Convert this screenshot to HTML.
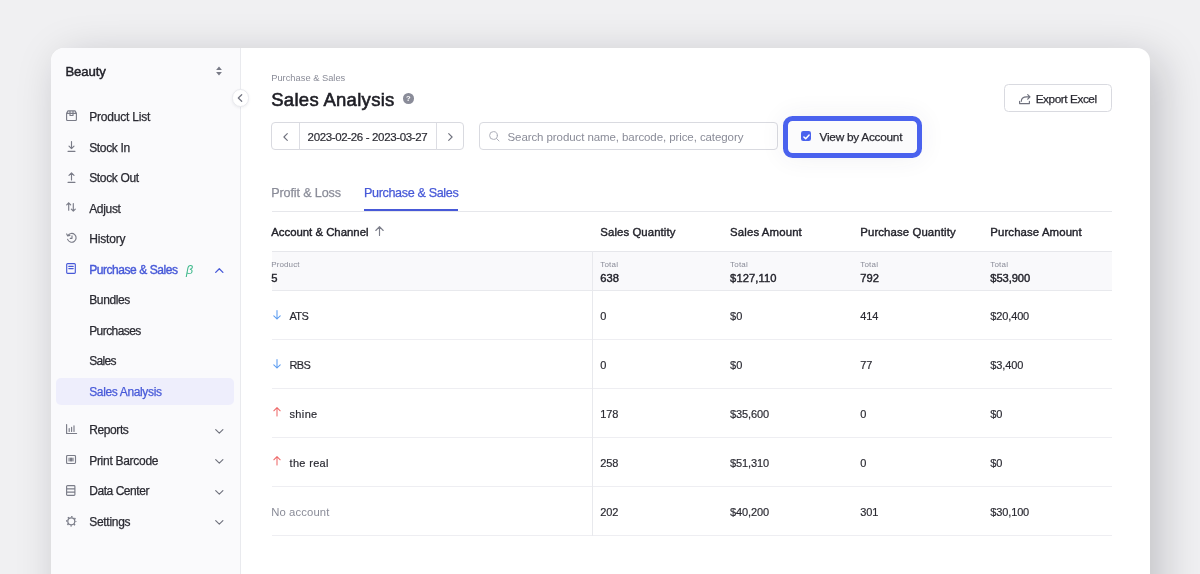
<!DOCTYPE html>
<html lang="en">
<head>
<meta charset="utf-8">
<title>Sales Analysis</title>
<style>
*{box-sizing:border-box;margin:0;padding:0}
html,body{width:1200px;height:574px;overflow:hidden}
body{background:#f0f0f2;font-family:"Liberation Sans",sans-serif;color:#2a2a32;position:relative}
.card{position:absolute;left:51px;top:48px;width:1099px;height:620px;background:#fff;border-radius:13px 13px 0 0;box-shadow:10px 10px 44px rgba(15,15,30,.21)}
.side{position:absolute;left:51px;top:48px;width:190px;height:620px;background:#fafafc;border-right:1px solid #e9eaee;border-radius:13px 0 0 0}
.t{position:absolute;white-space:nowrap}
.txt{position:absolute;left:0;top:0;width:1200px;height:574px;will-change:transform}
.a{position:absolute}
.sel{left:56px;top:378px;width:178px;height:27px;background:#eeeefc;border-radius:5px}
svg{position:absolute;overflow:visible;fill:none;stroke-linecap:round;stroke-linejoin:round}
.ic{stroke:#7a7c88;stroke-width:1.150}
.box{position:absolute;border:1px solid #d9dae0;border-radius:4px;background:#fff}
.hl{position:absolute;left:271.500px;width:840px;height:1px;background:#eeeef2}
</style>
</head>
<body>
<div class="card"></div>
<div class="side"></div>
<div class="a sel"></div>

<!-- collapse button -->
<div class="a" style="left:231.500px;top:89.300px;width:17.500px;height:17.500px;border-radius:50%;background:#fff;border:1px solid #e9eaee;box-shadow:0 1px 3px rgba(30,30,50,.07)"></div>
<svg class="ic" style="left:237px;top:94.200px;stroke:#737581;stroke-width:1.250" width="6" height="8" viewBox="0 0 6 8"><path d="M4.700 .700 1.300 4l3.400 3.300"/></svg>

<!-- brand sort arrows -->
<svg style="left:214.500px;top:65.700px" width="8" height="10" viewBox="0 0 8 10"><path d="M4 .4 6.900 4H1.100Z M4 9.600 1.100 6h5.800Z" fill="#787a86" stroke="none"/></svg>

<!-- sidebar icons -->
<svg class="ic" style="left:65.5px;top:110.4px" width="11" height="11" viewBox="0 0 11 11"><path d="M.6 3.4 2 .9h7l1.4 2.5v6.2a.9.9 0 0 1-.9.9h-8a.9.9 0 0 1-.9-.9Z M.6 3.400h9.800 M4 .900v4.600h3V.900"/></svg>
<svg class="ic" style="left:66.700px;top:141px" width="9" height="11" viewBox="0 0 9 11"><path d="M4.500 .600v7 M2 5.200 4.500 7.700 7 5.200 M1 10.300h7"/></svg>
<svg class="ic" style="left:66.700px;top:172px" width="9" height="11" viewBox="0 0 9 11"><path d="M4.500 7.900V.800 M2 3.300 4.500 .800 7 3.300 M1 10.300h7"/></svg>
<svg class="ic" style="left:66px;top:202.4px" width="10" height="10" viewBox="0 0 10 10"><path d="M2.7 8.2V.8 M.7 2.9 2.7 .8 4.7 2.9 M7.3 1.6v7.5 M5.3 7.1l2 2.1 2-2.1"/></svg>
<svg class="ic" style="left:65.8px;top:233.2px" width="11" height="10" viewBox="0 0 11 10"><path d="M1.9 2.6A4.4 4.4 0 1 1 1.6 6.4 M.7 .9 1.7 2.9 3.9 2.4 M6 2.9V5.3H4.2"/></svg>
<svg class="ic" style="left:66.2px;top:263.3px;stroke:#4759d8;stroke-width:1.15" width="10" height="11" viewBox="0 0 10 11"><path d="M.7 1.5a.9.9 0 0 1 .9-.9h6.8a.9.9 0 0 1 .9.9v8a.9.9 0 0 1-.9.9H1.6a.9.9 0 0 1-.9-.9Z M2.8 3.4h4.4 M2.8 5.6h4.4"/></svg>
<svg class="ic" style="left:65.6px;top:424.3px" width="11" height="10" viewBox="0 0 11 10"><path d="M.6 .5v9h10 M3.2 7.4V4.6 M5.6 7.4V3.2 M8 7.4V1.8"/></svg>
<svg class="ic" style="left:65.9px;top:455.3px" width="10" height="9" viewBox="0 0 10 9"><path d="M.6 1.4a.9.9 0 0 1 .9-.9h7.1a.9.9 0 0 1 .9.9v6.2a.9.9 0 0 1-.9.9H1.5a.9.9 0 0 1-.9-.9Z M3.1 3v3 M4.6 3v3 M5.6 3v3 M7 3v3"/></svg>
<svg class="ic" style="left:66.4px;top:485.2px" width="10" height="11" viewBox="0 0 10 11"><path d="M.6 1.5a.9.9 0 0 1 .9-.9h6.5a.9.9 0 0 1 .9.9v8a.9.9 0 0 1-.9.9H1.5a.9.9 0 0 1-.9-.9Z M.6 3.9h8.3 M.6 7.1h8.3"/></svg>
<svg class="ic" style="left:65.900px;top:516.400px" width="11" height="11" viewBox="0 0 11 11"><circle cx="5.300" cy="5.300" r="3.500" stroke-width="1.200"/><circle cx="5.300" cy="5.300" r="4.600" stroke-width="1.300" stroke-dasharray="1.500 2.113" stroke-dashoffset=".75" stroke-linecap="butt"/></svg>

<!-- sidebar chevrons -->
<svg class="ic" style="left:214.7px;top:268.3px;stroke:#4759d8;stroke-width:1.3" width="9" height="5" viewBox="0 0 9 5"><path d="M.7 4.4 4.3 .8 7.900 4.400"/></svg>
<svg class="ic ch" style="left:214.7px;top:428.6px;stroke:#6f717d" width="9" height="5" viewBox="0 0 9 5"><path d="M.7 .6 4.300 4.200 7.900 .600"/></svg>
<svg class="ic ch" style="left:214.7px;top:459.1px;stroke:#6f717d" width="9" height="5" viewBox="0 0 9 5"><path d="M.7 .6 4.300 4.200 7.900 .600"/></svg>
<svg class="ic ch" style="left:214.7px;top:489.6px;stroke:#6f717d" width="9" height="5" viewBox="0 0 9 5"><path d="M.7 .6 4.300 4.200 7.900 .600"/></svg>
<svg class="ic ch" style="left:214.7px;top:520.1px;stroke:#6f717d" width="9" height="5" viewBox="0 0 9 5"><path d="M.7 .6 4.300 4.200 7.900 .600"/></svg>

<!-- help icon -->
<div class="a" style="left:403.300px;top:92.900px;width:10.700px;height:10.700px;border-radius:50%;background:#8a8c99"></div>

<!-- export button -->
<div class="box" style="left:1004px;top:84px;width:107.500px;height:28px;border-radius:4.500px"></div>
<svg class="ic" style="left:1019px;top:93.8px;stroke:#6f717d" width="12" height="11" viewBox="0 0 12 11"><path d="M.6 7.300v2.300h9.800V7.300 M2.300 7.300C2.300 4.300 4.300 2.900 7.600 2.900H10.900 M8.700 .6l2.300 2.300-2.300 2.300"/></svg>

<!-- date picker -->
<div class="box" style="left:271px;top:122px;width:193px;height:28px"></div>
<div class="a" style="left:299px;top:123px;width:1px;height:26.500px;background:#dcdde3"></div>
<div class="a" style="left:436px;top:123px;width:1px;height:26.500px;background:#dcdde3"></div>
<svg class="ic" style="left:283.300px;top:132.600px;stroke:#6f717d;stroke-width:1.1" width="5" height="8" viewBox="0 0 5 8"><path d="M4.300 .600.900 4l3.400 3.400"/></svg>
<svg class="ic" style="left:447.800px;top:132.600px;stroke:#6f717d;stroke-width:1.1" width="5" height="8" viewBox="0 0 5 8"><path d="M.700 .600 4.100 4 .700 7.400"/></svg>

<!-- search -->
<div class="box" style="left:479px;top:122px;width:299px;height:28px"></div>
<svg class="ic" style="left:488.800px;top:130.500px;stroke:#adafb9;stroke-width:1" width="11" height="11" viewBox="0 0 11 11"><circle cx="4.500" cy="4.500" r="3.900"/><path d="M7.400 7.400 10 10"/></svg>

<!-- highlight -->
<div class="a" style="left:783px;top:115.800px;width:139px;height:42.400px;border:5.400px solid #4a62ee;border-radius:9.500px;background:#fbfbfc;box-shadow:0 0 26px rgba(60,60,90,.07)"></div>
<div class="a" style="left:800.900px;top:131.200px;width:10.300px;height:10.300px;border-radius:2.200px;background:#4a62ee"></div>
<svg style="left:802.600px;top:133.600px;stroke:#fff;stroke-width:1.500" width="7" height="6" viewBox="0 0 7 6"><path d="M.900 3 2.700 4.800 6.100 1"/></svg>

<!-- tabs -->
<div class="a" style="left:271.500px;top:211px;width:840px;height:1px;background:#e6e7eb"></div>
<div class="a" style="left:364px;top:208.500px;width:94px;height:2.600px;background:#4759d8"></div>

<!-- table -->
<svg class="ic" style="left:374.900px;top:226.300px;stroke:#7d7f8b" width="9" height="10" viewBox="0 0 9 10"><path d="M4.500 9.500V.8 M.800 4.500 4.500 .700 8.200 4.500"/></svg>
<div class="a" style="left:271.500px;top:251px;width:840px;height:1px;background:#e6e7eb"></div>
<div class="a" style="left:271.500px;top:252px;width:840px;height:38px;background:#f9f9fb"></div>
<div class="a" style="left:271.500px;top:290px;width:840px;height:1px;background:#e8e9ed"></div>
<div class="hl" style="top:339px"></div>
<div class="hl" style="top:388px"></div>
<div class="hl" style="top:437px"></div>
<div class="hl" style="top:486px"></div>
<div class="hl" style="top:535px"></div>
<div class="a" style="left:592px;top:251px;width:1px;height:285px;background:#e8e9ed"></div>

<!-- row arrows -->
<svg class="ic" style="left:272.600px;top:309.600px;stroke:#5a9bf0;stroke-width:1.050" width="8" height="10" viewBox="0 0 8 10"><path d="M4 .600v8.400 M.800 5.800 4 9 7.200 5.800"/></svg>
<svg class="ic" style="left:272.600px;top:358.600px;stroke:#5a9bf0;stroke-width:1.050" width="8" height="10" viewBox="0 0 8 10"><path d="M4 .600v8.400 M.800 5.800 4 9 7.200 5.800"/></svg>
<svg class="ic" style="left:272.600px;top:407.300px;stroke:#ee6a6a;stroke-width:1.050" width="8" height="10" viewBox="0 0 8 10"><path d="M4 9V.600 M.800 3.800 4 .600 7.200 3.800"/></svg>
<svg class="ic" style="left:272.600px;top:456.300px;stroke:#ee6a6a;stroke-width:1.050" width="8" height="10" viewBox="0 0 8 10"><path d="M4 9V.600 M.800 3.800 4 .600 7.200 3.800"/></svg>

<div class="txt">
<span class="t" id="brand" style="left:65.40px;top:63.00px;font-size:13.2px;line-height:17px;color:#22222a;letter-spacing:-0.127px;-webkit-text-stroke:.45px #22222a;">Beauty</span>
<span class="t" id="s0" style="left:89.20px;top:110.00px;font-size:12px;line-height:15px;color:#2a2a32;letter-spacing:-0.198px;-webkit-text-stroke:.25px #2a2a32;">Product List</span>
<span class="t" id="s1" style="left:89.20px;top:141.00px;font-size:12px;line-height:15px;color:#2a2a32;letter-spacing:-0.345px;-webkit-text-stroke:.25px #2a2a32;">Stock In</span>
<span class="t" id="s2" style="left:89.20px;top:171.00px;font-size:12px;line-height:15px;color:#2a2a32;letter-spacing:-0.354px;-webkit-text-stroke:.25px #2a2a32;">Stock Out</span>
<span class="t" id="s3" style="left:89.20px;top:202.00px;font-size:12px;line-height:15px;color:#2a2a32;letter-spacing:-0.327px;-webkit-text-stroke:.25px #2a2a32;">Adjust</span>
<span class="t" id="s4" style="left:89.20px;top:232.00px;font-size:12px;line-height:15px;color:#2a2a32;letter-spacing:-0.178px;-webkit-text-stroke:.25px #2a2a32;">History</span>
<span class="t" id="s5" style="left:89.20px;top:263.00px;font-size:12px;line-height:15px;color:#4759d8;letter-spacing:-0.443px;-webkit-text-stroke:.4px #4759d8;">Purchase &amp; Sales</span>
<span class="t" id="s6" style="left:89.20px;top:293.00px;font-size:12px;line-height:15px;color:#2a2a32;letter-spacing:-0.368px;-webkit-text-stroke:.25px #2a2a32;">Bundles</span>
<span class="t" id="s7" style="left:89.20px;top:324.00px;font-size:12px;line-height:15px;color:#2a2a32;letter-spacing:-0.578px;-webkit-text-stroke:.25px #2a2a32;">Purchases</span>
<span class="t" id="s8" style="left:89.20px;top:354.00px;font-size:12px;line-height:15px;color:#2a2a32;letter-spacing:-0.646px;-webkit-text-stroke:.25px #2a2a32;">Sales</span>
<span class="t" id="s9" style="left:89.20px;top:385.00px;font-size:12px;line-height:15px;color:#4759d8;letter-spacing:-0.355px;-webkit-text-stroke:.25px #4759d8;">Sales Analysis</span>
<span class="t" id="s10" style="left:89.20px;top:423.00px;font-size:12px;line-height:15px;color:#2a2a32;letter-spacing:-0.390px;-webkit-text-stroke:.25px #2a2a32;">Reports</span>
<span class="t" id="s11" style="left:89.20px;top:454.00px;font-size:12px;line-height:15px;color:#2a2a32;letter-spacing:-0.285px;-webkit-text-stroke:.25px #2a2a32;">Print Barcode</span>
<span class="t" id="s12" style="left:89.20px;top:484.00px;font-size:12px;line-height:15px;color:#2a2a32;letter-spacing:-0.446px;-webkit-text-stroke:.25px #2a2a32;">Data Center</span>
<span class="t" id="s13" style="left:89.20px;top:515.00px;font-size:12px;line-height:15px;color:#2a2a32;letter-spacing:-0.282px;-webkit-text-stroke:.25px #2a2a32;">Settings</span>
<span class="t" id="beta" style="left:185.90px;top:262.00px;font-size:12.5px;line-height:16px;color:#3fb98c;font-style:italic;font-family:"Liberation Serif",serif;">β</span>
<span class="t" id="crumb" style="left:271.20px;top:72.00px;font-size:9.3px;line-height:12px;color:#8a8c98;letter-spacing:0.012px;">Purchase &amp; Sales</span>
<span class="t" id="title" style="left:271.20px;top:88.00px;font-size:18.5px;line-height:24px;color:#1e1e25;letter-spacing:0.300px;transform:translateY(-0.45px);-webkit-text-stroke:.6px #1e1e25;">Sales Analysis</span>
<span class="t" id="help" style="left:406.00px;top:94.00px;font-size:7.6px;line-height:10px;color:#fff;font-weight:bold;">?</span>
<span class="t" id="date" style="left:307.60px;top:130.00px;font-size:11.5px;line-height:15px;color:#2a2a32;letter-spacing:-0.351px;-webkit-text-stroke:.18px #2a2a32;">2023-02-26 - 2023-03-27</span>
<span class="t" id="ph" style="left:507.50px;top:130.00px;font-size:11.5px;line-height:15px;color:#8a8c98;letter-spacing:-0.087px;">Search product name, barcode, price, category</span>
<span class="t" id="vba" style="left:819.60px;top:130.00px;font-size:11.8px;line-height:15px;color:#2a2a32;letter-spacing:-0.251px;-webkit-text-stroke:.25px #2a2a32;">View by Account</span>
<span class="t" id="exp" style="left:1035.70px;top:92.00px;font-size:11.8px;line-height:15px;color:#2a2a32;letter-spacing:-0.436px;-webkit-text-stroke:.25px #2a2a32;">Export Excel</span>
<span class="t" id="tab1" style="left:271.20px;top:185.00px;font-size:12.6px;line-height:16px;color:#8a8c98;letter-spacing:-0.124px;-webkit-text-stroke:.25px #8a8c98;">Profit &amp; Loss</span>
<span class="t" id="tab2" style="left:364.00px;top:185.00px;font-size:12.6px;line-height:16px;color:#4759d8;letter-spacing:-0.357px;-webkit-text-stroke:.25px #4759d8;">Purchase &amp; Sales</span>
<span class="t" id="th0" style="left:271.20px;top:225.00px;font-size:11.4px;line-height:15px;color:#24242c;letter-spacing:-0.014px;-webkit-text-stroke:.4px #24242c;">Account &amp; Channel</span>
<span class="t" id="th1" style="left:600.30px;top:225.00px;font-size:11.4px;line-height:15px;color:#24242c;letter-spacing:0.080px;-webkit-text-stroke:.4px #24242c;">Sales Quantity</span>
<span class="t" id="th2" style="left:730.10px;top:225.00px;font-size:11.4px;line-height:15px;color:#24242c;letter-spacing:0.125px;-webkit-text-stroke:.4px #24242c;">Sales Amount</span>
<span class="t" id="th3" style="left:860.30px;top:225.00px;font-size:11.4px;line-height:15px;color:#24242c;letter-spacing:0.099px;-webkit-text-stroke:.4px #24242c;">Purchase Quantity</span>
<span class="t" id="th4" style="left:990.30px;top:225.00px;font-size:11.4px;line-height:15px;color:#24242c;letter-spacing:0.105px;-webkit-text-stroke:.4px #24242c;">Purchase Amount</span>
<span class="t" id="lb0" style="left:271.20px;top:260.00px;font-size:8px;line-height:10px;color:#8a8c98;letter-spacing:0.132px;">Product</span>
<span class="t" id="lbt0" style="left:600.30px;top:260.00px;font-size:8px;line-height:10px;color:#8a8c98;letter-spacing:0.179px;">Total</span>
<span class="t" id="lbt1" style="left:730.10px;top:260.00px;font-size:8px;line-height:10px;color:#8a8c98;letter-spacing:0.179px;">Total</span>
<span class="t" id="lbt2" style="left:860.30px;top:260.00px;font-size:8px;line-height:10px;color:#8a8c98;letter-spacing:0.179px;">Total</span>
<span class="t" id="lbt3" style="left:990.30px;top:260.00px;font-size:8px;line-height:10px;color:#8a8c98;letter-spacing:0.179px;">Total</span>
<span class="t" id="tot0" style="left:271.20px;top:271.00px;font-size:11.2px;line-height:14px;color:#24242c;-webkit-text-stroke:.4px #24242c;">5</span>
<span class="t" id="tot1" style="left:600.30px;top:271.00px;font-size:11.2px;line-height:14px;color:#24242c;letter-spacing:-0.057px;-webkit-text-stroke:.4px #24242c;">638</span>
<span class="t" id="tot2" style="left:730.10px;top:271.00px;font-size:11.2px;line-height:14px;color:#24242c;letter-spacing:0.070px;-webkit-text-stroke:.4px #24242c;">$127,110</span>
<span class="t" id="tot3" style="left:860.30px;top:271.00px;font-size:11.2px;line-height:14px;color:#24242c;letter-spacing:0.043px;-webkit-text-stroke:.4px #24242c;">792</span>
<span class="t" id="tot4" style="left:990.30px;top:271.00px;font-size:11.2px;line-height:14px;color:#24242c;letter-spacing:-0.093px;-webkit-text-stroke:.4px #24242c;">$53,900</span>
<span class="t" id="n0" style="left:289.50px;top:309.00px;font-size:11px;line-height:14px;color:#2a2a32;letter-spacing:-0.659px;-webkit-text-stroke:.18px #2a2a32;">ATS</span>
<span class="t" id="v0_0" style="left:600.30px;top:309.00px;font-size:11px;line-height:14px;color:#2a2a32;-webkit-text-stroke:.18px #2a2a32;">0</span>
<span class="t" id="v0_1" style="left:730.10px;top:309.00px;font-size:11px;line-height:14px;color:#2a2a32;letter-spacing:-0.075px;-webkit-text-stroke:.18px #2a2a32;">$0</span>
<span class="t" id="v0_2" style="left:860.30px;top:309.00px;font-size:11px;line-height:14px;color:#2a2a32;letter-spacing:-0.103px;-webkit-text-stroke:.18px #2a2a32;">414</span>
<span class="t" id="v0_3" style="left:990.30px;top:309.00px;font-size:11px;line-height:14px;color:#2a2a32;letter-spacing:-0.138px;-webkit-text-stroke:.18px #2a2a32;">$20,400</span>
<span class="t" id="n1" style="left:289.50px;top:358.00px;font-size:11px;line-height:14px;color:#2a2a32;letter-spacing:-0.608px;-webkit-text-stroke:.18px #2a2a32;">RBS</span>
<span class="t" id="v1_0" style="left:600.30px;top:358.00px;font-size:11px;line-height:14px;color:#2a2a32;-webkit-text-stroke:.18px #2a2a32;">0</span>
<span class="t" id="v1_1" style="left:730.10px;top:358.00px;font-size:11px;line-height:14px;color:#2a2a32;letter-spacing:-0.075px;-webkit-text-stroke:.18px #2a2a32;">$0</span>
<span class="t" id="v1_2" style="left:860.30px;top:358.00px;font-size:11px;line-height:14px;color:#2a2a32;letter-spacing:-0.075px;-webkit-text-stroke:.18px #2a2a32;">77</span>
<span class="t" id="v1_3" style="left:990.30px;top:358.00px;font-size:11px;line-height:14px;color:#2a2a32;letter-spacing:-0.134px;-webkit-text-stroke:.18px #2a2a32;">$3,400</span>
<span class="t" id="n2" style="left:289.50px;top:407.00px;font-size:11px;line-height:14px;color:#2a2a32;letter-spacing:0.361px;-webkit-text-stroke:.18px #2a2a32;">shine</span>
<span class="t" id="v2_0" style="left:600.30px;top:407.00px;font-size:11px;line-height:14px;color:#2a2a32;letter-spacing:-0.103px;-webkit-text-stroke:.18px #2a2a32;">178</span>
<span class="t" id="v2_1" style="left:730.10px;top:407.00px;font-size:11px;line-height:14px;color:#2a2a32;letter-spacing:-0.138px;-webkit-text-stroke:.18px #2a2a32;">$35,600</span>
<span class="t" id="v2_2" style="left:860.30px;top:407.00px;font-size:11px;line-height:14px;color:#2a2a32;-webkit-text-stroke:.18px #2a2a32;">0</span>
<span class="t" id="v2_3" style="left:990.30px;top:407.00px;font-size:11px;line-height:14px;color:#2a2a32;letter-spacing:-0.075px;-webkit-text-stroke:.18px #2a2a32;">$0</span>
<span class="t" id="n3" style="left:289.50px;top:456.00px;font-size:11px;line-height:14px;color:#2a2a32;letter-spacing:0.325px;-webkit-text-stroke:.18px #2a2a32;">the real</span>
<span class="t" id="v3_0" style="left:600.30px;top:456.00px;font-size:11px;line-height:14px;color:#2a2a32;letter-spacing:-0.103px;-webkit-text-stroke:.18px #2a2a32;">258</span>
<span class="t" id="v3_1" style="left:730.10px;top:456.00px;font-size:11px;line-height:14px;color:#2a2a32;letter-spacing:-0.138px;-webkit-text-stroke:.18px #2a2a32;">$51,310</span>
<span class="t" id="v3_2" style="left:860.30px;top:456.00px;font-size:11px;line-height:14px;color:#2a2a32;-webkit-text-stroke:.18px #2a2a32;">0</span>
<span class="t" id="v3_3" style="left:990.30px;top:456.00px;font-size:11px;line-height:14px;color:#2a2a32;letter-spacing:-0.075px;-webkit-text-stroke:.18px #2a2a32;">$0</span>
<span class="t" id="n4" style="left:271.20px;top:505.00px;font-size:11.3px;line-height:15px;color:#8a8c98;letter-spacing:0.114px;">No account</span>
<span class="t" id="v4_0" style="left:600.30px;top:505.00px;font-size:11px;line-height:14px;color:#2a2a32;letter-spacing:-0.103px;-webkit-text-stroke:.18px #2a2a32;">202</span>
<span class="t" id="v4_1" style="left:730.10px;top:505.00px;font-size:11px;line-height:14px;color:#2a2a32;letter-spacing:-0.138px;-webkit-text-stroke:.18px #2a2a32;">$40,200</span>
<span class="t" id="v4_2" style="left:860.30px;top:505.00px;font-size:11px;line-height:14px;color:#2a2a32;letter-spacing:-0.103px;-webkit-text-stroke:.18px #2a2a32;">301</span>
<span class="t" id="v4_3" style="left:990.30px;top:505.00px;font-size:11px;line-height:14px;color:#2a2a32;letter-spacing:-0.138px;-webkit-text-stroke:.18px #2a2a32;">$30,100</span>
</div>
</body>
</html>
